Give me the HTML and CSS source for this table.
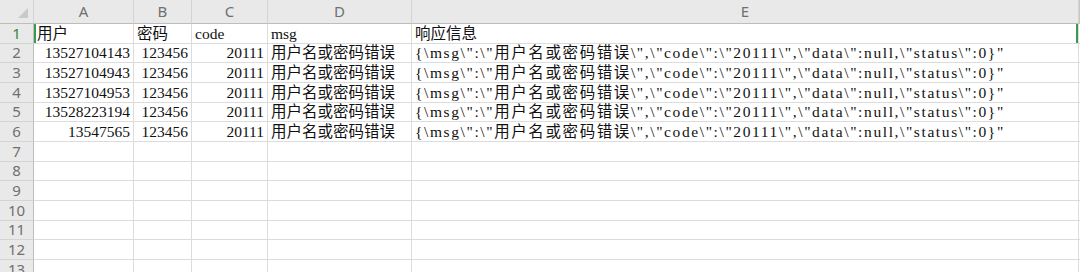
FILE: index.html
```html
<!DOCTYPE html>
<html lang="zh">
<head>
<meta charset="utf-8">
<title>Sheet</title>
<link rel="stylesheet" href="styles.css">
</head>
<body>
<div class="sheet">
  <div class="corner"><span class="tri"></span></div>
  <div class="ch">A</div><div class="ch">B</div><div class="ch">C</div><div class="ch">D</div><div class="ch">E</div><div class="ch pad"></div>

  <div class="rh sel">1</div>
  <div class="c l first">用户</div><div class="c l">密码</div><div class="c l">code</div><div class="c l">msg</div><div class="c l last">响应信息</div><div class="c pad"></div>

  <div class="rh">2</div>
  <div class="c r">13527104143</div><div class="c r">123456</div><div class="c r">20111</div><div class="c l">用户名或密码错误</div><div class="c l json">{\msg\":\"用户名或密码错误\",\"code\":\"20111\",\"data\":null,\"status\":0}"</div><div class="c pad"></div>

  <div class="rh">3</div>
  <div class="c r">13527104943</div><div class="c r">123456</div><div class="c r">20111</div><div class="c l">用户名或密码错误</div><div class="c l json">{\msg\":\"用户名或密码错误\",\"code\":\"20111\",\"data\":null,\"status\":0}"</div><div class="c pad"></div>

  <div class="rh">4</div>
  <div class="c r">13527104953</div><div class="c r">123456</div><div class="c r">20111</div><div class="c l">用户名或密码错误</div><div class="c l json">{\msg\":\"用户名或密码错误\",\"code\":\"20111\",\"data\":null,\"status\":0}"</div><div class="c pad"></div>

  <div class="rh">5</div>
  <div class="c r">13528223194</div><div class="c r">123456</div><div class="c r">20111</div><div class="c l">用户名或密码错误</div><div class="c l json">{\msg\":\"用户名或密码错误\",\"code\":\"20111\",\"data\":null,\"status\":0}"</div><div class="c pad"></div>

  <div class="rh">6</div>
  <div class="c r">13547565</div><div class="c r">123456</div><div class="c r">20111</div><div class="c l">用户名或密码错误</div><div class="c l json">{\msg\":\"用户名或密码错误\",\"code\":\"20111\",\"data\":null,\"status\":0}"</div><div class="c pad"></div>

  <div class="rh">7</div><div class="c"></div><div class="c"></div><div class="c"></div><div class="c"></div><div class="c"></div><div class="c pad"></div>
  <div class="rh">8</div><div class="c"></div><div class="c"></div><div class="c"></div><div class="c"></div><div class="c"></div><div class="c pad"></div>
  <div class="rh">9</div><div class="c"></div><div class="c"></div><div class="c"></div><div class="c"></div><div class="c"></div><div class="c pad"></div>
  <div class="rh">10</div><div class="c"></div><div class="c"></div><div class="c"></div><div class="c"></div><div class="c"></div><div class="c pad"></div>
  <div class="rh">11</div><div class="c"></div><div class="c"></div><div class="c"></div><div class="c"></div><div class="c"></div><div class="c pad"></div>
  <div class="rh">12</div><div class="c"></div><div class="c"></div><div class="c"></div><div class="c"></div><div class="c"></div><div class="c pad"></div>
  <div class="rh">13</div><div class="c"></div><div class="c"></div><div class="c"></div><div class="c"></div><div class="c"></div><div class="c pad"></div>
</div>
</body>
</html>
```

FILE: styles.css
```css
* { box-sizing: border-box; }
html, body { margin: 0; padding: 0; background: #fff; }
body { width: 1080px; height: 272px; overflow: hidden; }

.sheet {
  display: grid;
  grid-template-columns: 34px 100px 58px 76px 144px 667px 1fr;
  grid-template-rows: 24px repeat(13, 19.67px);
  width: 1080px;
}

.corner, .ch, .rh {
  background: #e9e9e9;
  color: #707070;
  font-family: "Noto Sans", "Open Sans", sans-serif;
  font-size: 15px;
  border-right: 1px solid #d4d4d4;
  border-bottom: 1px solid #d4d4d4;
  display: flex;
  align-items: center;
  justify-content: center;
  line-height: 1;
}
.ch { border-bottom: 1px solid #bdbdbd; }
.corner { position: relative; border-bottom: 1px solid #bdbdbd; }
.tri {
  position: absolute;
  right: 5px;
  bottom: 5px;
  width: 0; height: 0;
  border-left: 10px solid transparent;
  border-bottom: 10px solid #c9c9c9;
}
.rh { border-right: 1px solid #bdbdbd; }
.rh.sel { color: #2e8b3e; }

.c {
  border-right: 1px solid #dcdcdc;
  border-bottom: 1px solid #dcdcdc;
  font-family: "Liberation Serif", "Noto Sans CJK SC", serif;
  font-size: 15.5px;
  color: #111;
  white-space: nowrap;
  overflow: hidden;
  display: flex;
  align-items: flex-end;
  padding-bottom: 0;
  line-height: 18px;
}
.c.l { justify-content: flex-start; padding-left: 3px; }
.c.r { justify-content: flex-end; padding-right: 3px; }
.c.pad { border-right: none; background: #fff; }
.ch.pad { border-right: none; border-left: 1px solid #c8c8c8; }
.first { box-shadow: inset 2px 0 0 #3b9a4f; }
.last { box-shadow: inset -2px 0 0 #3b9a4f; }
.json { letter-spacing: 1.6px; }
```
